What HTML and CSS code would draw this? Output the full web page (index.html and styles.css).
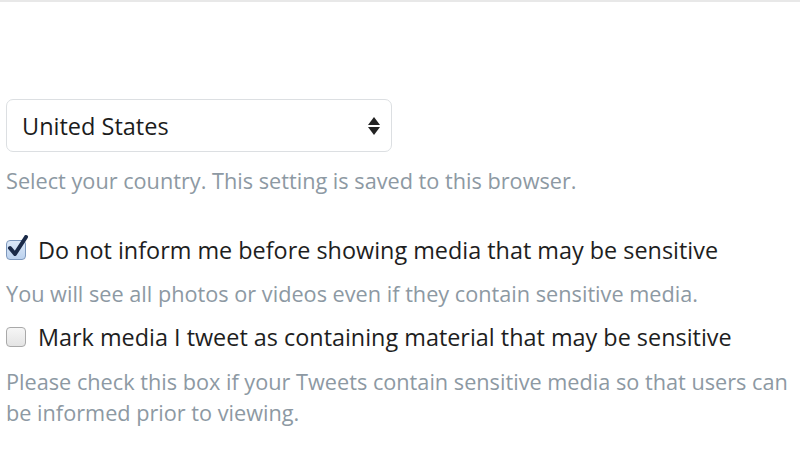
FILE: index.html
```html
<!DOCTYPE html>
<html>
	<head>
		<meta charset="UTF-8">
		<title>Content settings</title>
		<link rel="stylesheet" href="styles.css">
	</head>
	<body>
		<div class="topline"></div>
		<div class="settings">
			<div class="select-wrap">
				<select class="country">
					<option>United States</option>
				</select>
				<svg class="arrows" width="14" height="20" viewBox="0 0 14 20">
					<path d="M7 1 L13 9 L1 9 Z" fill="#222"/>
					<path d="M1 11 L13 11 L7 19 Z" fill="#222"/>
				</svg>
			</div>
			<p class="help first">Select your country. This setting is saved to this browser.</p>

			<label class="check-row">
				<span class="box checked">
					<svg class="tick" width="22" height="24" viewBox="0 0 22 24">
						<path d="M3 13 L8 19 L19 2" fill="none" stroke="#1a2a48" stroke-width="4" stroke-linecap="round" stroke-linejoin="round"/>
					</svg>
				</span>
				<span class="label">Do not inform me before showing media that may be sensitive</span>
			</label>
			<p class="help">You will see all photos or videos even if they contain sensitive media.</p>

			<label class="check-row second">
				<span class="box"></span>
				<span class="label">Mark media I tweet as containing material that may be sensitive</span>
			</label>
			<p class="help last">Please check this box if your Tweets contain sensitive media so that users can be informed prior to viewing.</p>
		</div>
	</body>
</html>
```

FILE: styles.css
```css
body{
	margin: 0;
	background-color: #fff;
	font-family: "Open Sans", "Liberation Sans", sans-serif;
	overflow: hidden;
}
.topline{
	height: 2px;
	background-color: #e8e8e8;
}
.settings{
	padding: 97px 0 0 6px;
}
.select-wrap{
	width: 386px;
	position: relative;
}
.country{
	appearance: none;
	-webkit-appearance: none;
	width: 100%;
	height: 53px;
	padding: 0 0 0 15px;
	border: 1px solid #dcdfe2;
	border-radius: 7px;
	background: #fff;
	font-family: inherit;
	font-size: 23.5px;
	color: #1c1c1c;
}
.arrows{
	position: absolute;
	right: 11px;
	top: 17px;
}
.help{
	margin: 0;
	color: #8d99a3;
	font-size: 21.7px;
	line-height: 31px;
}
.help.first{
	margin: 13px 0 39px;
}
.help.last{
	padding-right: 4px;
}
.check-row{
	display: flex;
	align-items: center;
	gap: 12px;
	height: 30px;
	margin-bottom: 13px;
}
.check-row.second{
	margin-top: 13px;
	margin-bottom: 14px;
}
.box{
	width: 18px;
	height: 18px;
	border: 1px solid #a9a9a9;
	border-radius: 4px;
	background: linear-gradient(#f6f6f6, #e4e4e4);
	position: relative;
	flex: none;
}
.box.checked{
	border-color: #7d98bd;
	background: linear-gradient(#dbe8f8, #bcd2ee);
}
.tick{
	position: absolute;
	left: 0;
	top: -6px;
}
.label{
	color: #1e1e1e;
	font-size: 23.4px;
	white-space: nowrap;
}
```
